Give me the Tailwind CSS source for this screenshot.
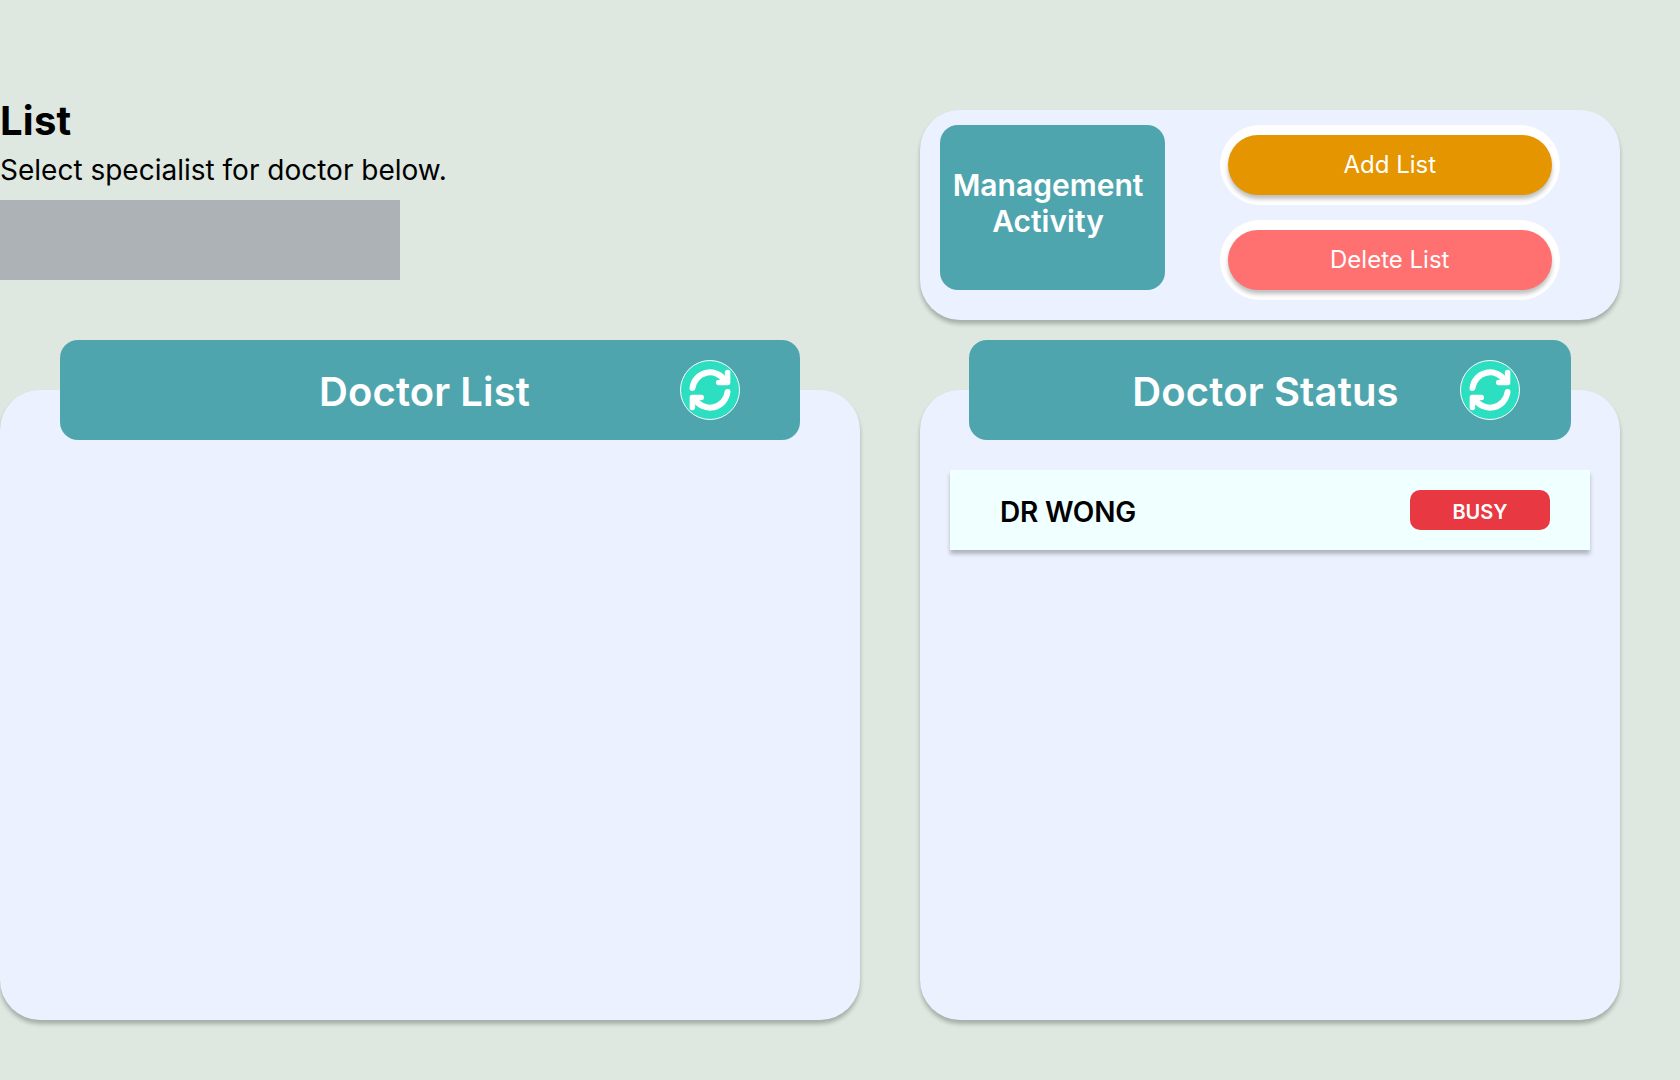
<!DOCTYPE html>
<html lang="en">
<head>
<meta charset="utf-8">
<title>Doctor List</title>
<script src="https://cdn.jsdelivr.net/npm/@tailwindcss/browser@4"></script>
</head>
<body class="h-screen overflow-hidden bg-[#dee8e0] font-['Inter',sans-serif] text-black">
<svg class="hidden">
  <symbol id="refresh" viewBox="0 0 60 60">
    <circle cx="30" cy="30" r="29.5" fill="#2cdfc1" stroke="#fff"/>
    <g fill="none" stroke="#fff" stroke-width="5.5" stroke-linecap="round" stroke-linejoin="round">
      <path stroke-width="6" d="M12.5 28A17.7 17.7 0 0 1 45.4 21.2"/>
      <path d="M47.6 12.6V22.4H38.7"/>
      <path stroke-width="6" d="M47.5 32A17.7 17.7 0 0 1 14.6 38.8"/>
      <path d="M12.4 47.4V37.6H21.3"/>
    </g>
  </symbol>
</svg>
<main class="flex gap-[60px]">
  <section class="flex w-[860px] flex-col pt-24">
    <h1 class="text-[40px] leading-[49px] font-bold tracking-[0.25px]">List</h1>
    <p class="mt-2 text-[28px] leading-[34px]">Select specialist for doctor below.</p>
    <div class="mt-[13px] h-20 w-[400px] bg-[#adb2b6]"></div>
    <header class="z-10 mt-[60px] -mb-[50px] ml-[60px] flex h-[100px] w-[740px] rounded-[18px] bg-[#4fa5ae] text-white">
      <h2 class="w-[620px] pt-[27px] pl-[109px] text-center text-[40px] leading-[49px] font-semibold tracking-[0.1px]">Doctor List</h2>
      <button class="mt-5 size-[60px]" aria-label="Refresh doctor list"><svg class="size-full"><use href="#refresh"/></svg></button>
    </header>
    <div class="h-[630px] rounded-[40px] bg-[#ebf1ff] shadow-[0_4px_4px_rgba(0,0,0,0.25)]"></div>
  </section>

  <section class="flex w-[700px] flex-col pt-[110px]">
    <div class="flex h-[210px] rounded-[40px] bg-[#ebf1ff] pt-[15px] pl-5 shadow-[0_4px_4px_rgba(0,0,0,0.25)]">
      <div class="flex h-[165px] w-[225px] flex-col rounded-[18px] bg-[#4fa5ae] pt-[42px] pr-[9px] text-center text-[30px] leading-9 font-semibold text-white">
        <span>Management</span>
        <span>Activity</span>
      </div>
      <div class="ml-[55px] flex w-[340px] flex-col gap-[15px] text-2xl text-white">
        <div class="h-20 rounded-full bg-white py-2.5 pr-[8.5px] pl-2">
          <button class="flex h-[60px] w-full justify-center rounded-full bg-[#e59500] pt-[15px] leading-[29px] shadow-[0_4px_4px_rgba(0,0,0,0.25)]">Add List</button>
        </div>
        <div class="h-20 rounded-full bg-white py-2.5 pr-[8.5px] pl-2">
          <button class="flex h-[60px] w-full justify-center rounded-full bg-[#ff7070] pt-[15px] leading-[29px] shadow-[0_4px_4px_rgba(0,0,0,0.25)]">Delete List</button>
        </div>
      </div>
    </div>
    <header class="z-10 mt-5 -mb-[50px] ml-[49px] flex h-[100px] w-[602px] rounded-[18px] bg-[#4fa5ae] text-white">
      <h2 class="w-[491px] pt-[27px] pl-[102px] text-center text-[40px] leading-[49px] font-semibold tracking-[0.15px]">Doctor Status</h2>
      <button class="mt-5 size-[60px]" aria-label="Refresh doctor status"><svg class="size-full"><use href="#refresh"/></svg></button>
    </header>
    <div class="h-[630px] rounded-[40px] bg-[#ebf1ff] px-[30px] pt-20 shadow-[0_4px_4px_rgba(0,0,0,0.25)]">
      <div class="flex h-20 justify-between bg-[#f0ffff] pr-10 pl-[50px] shadow-[0_4px_4px_rgba(0,0,0,0.25)]">
        <span class="pt-[25px] text-[28px] leading-[34px] font-semibold tracking-[-0.2px]">DR WONG</span>
        <span class="mt-5 h-10 w-[140px] rounded-[10px] bg-[#e83943] pt-[10px] text-center text-xl leading-6 font-semibold text-white">BUSY</span>
      </div>
    </div>
  </section>
</main>
</body>
</html>
